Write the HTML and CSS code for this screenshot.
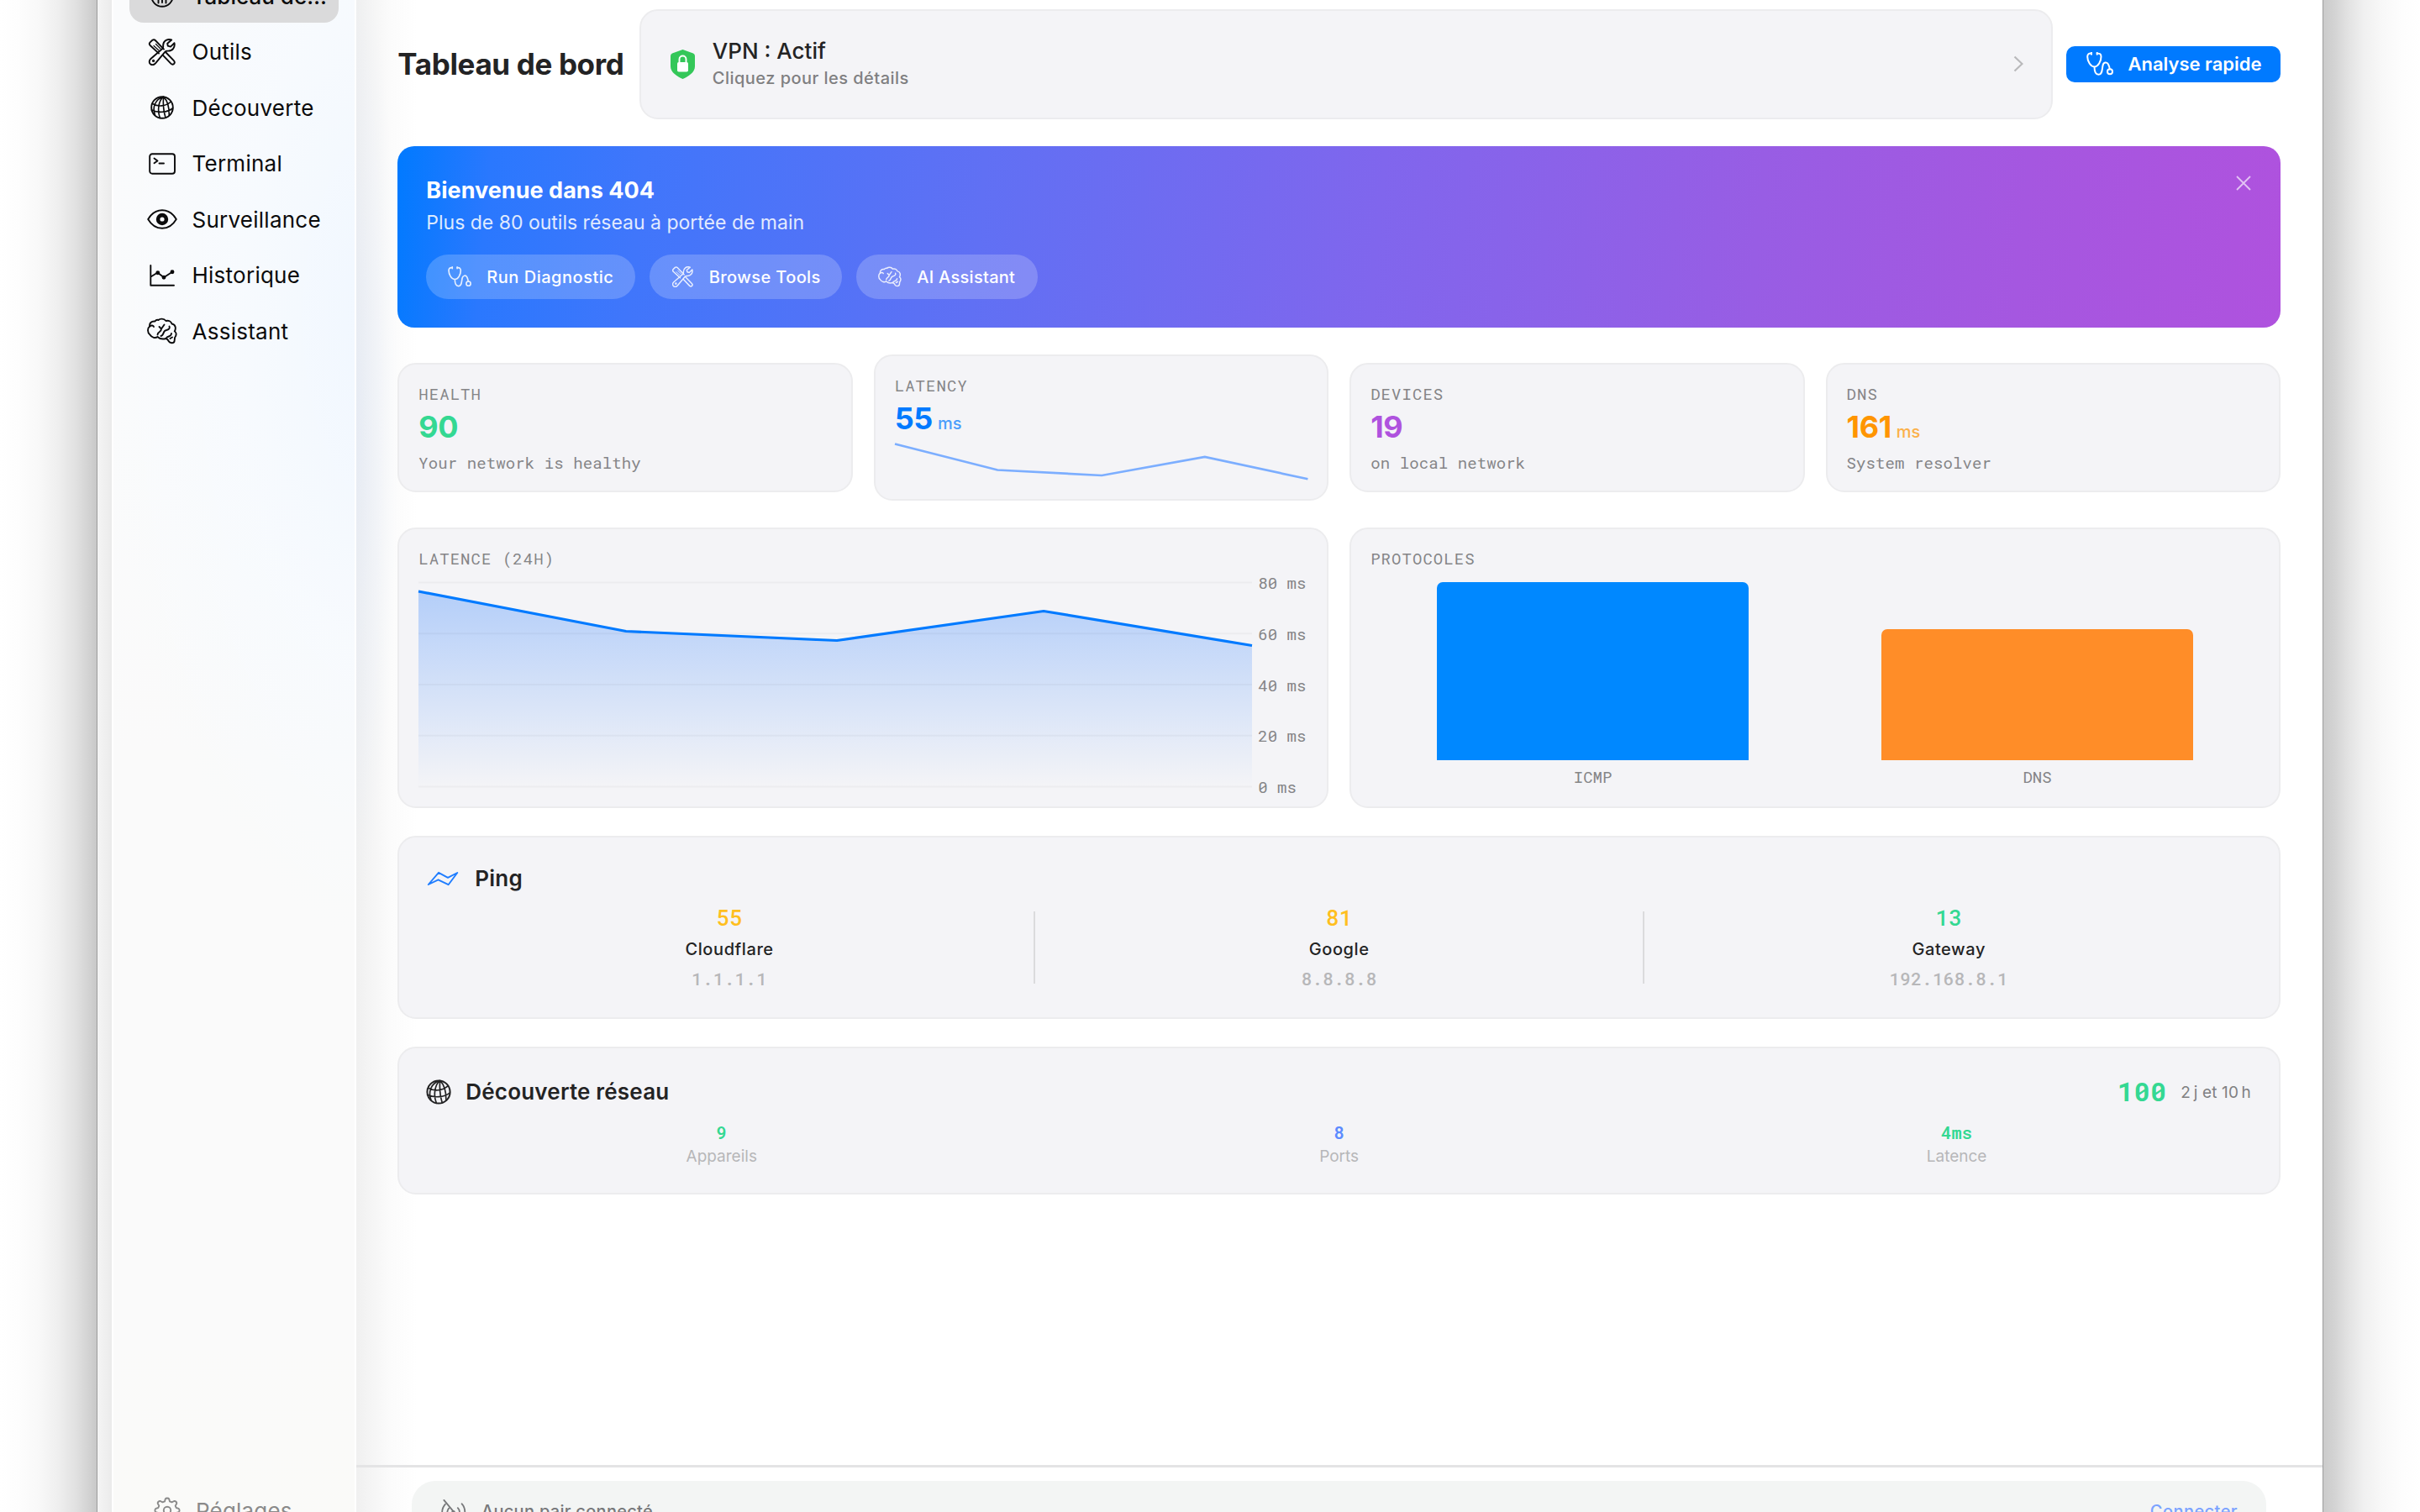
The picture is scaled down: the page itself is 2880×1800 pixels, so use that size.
FILE: index.html
```html
<!DOCTYPE html>
<html lang="fr">
<head>
<meta charset="utf-8">
<title>Tableau de bord</title>
<link rel="stylesheet" href="styles.css">
</head>
<body>
<svg class="sprite" aria-hidden="true">
  <symbol id="i-gauge" viewBox="0 0 32 32"><circle cx="16" cy="16" r="12.8"/><path d="M16 15V24M11.500 21v3.500M20.500 21v3.500"/></symbol>
  <symbol id="i-tools" viewBox="0 0 32 32">
    <path d="M1.600 8C.4 6.600.6 5.400 1.600 4.400L4.400 1.800C5.600.9 6.800 1 7.800 2L18 12.600M1.600 8L12 17.600"/>
    <path d="M6 8.500L12 14M8.500 6.500L14 12" stroke-width="1.200"/>
    <path d="M20.500 16.500L29.800 26.200C31.200 27.700 31 29 30 30C28.800 31 27.500 30.800 26.300 29.600L17 19.800"/>
    <path d="M27.200 1.500C22-.4 16.600 3 17.200 9C17.300 10.500 17 11.400 16 12.200L2.400 24C0 26.200.4 28.800 2 30.200C3.800 31.600 6.200 31.400 8 29.400L19.500 15.700C20.300 14.800 21.200 14.500 22.600 14.600C28.500 15 31.600 10 30.500 5.200L26 9.600L22.800 8.700L22.200 5.800Z"/>
    <circle cx="5.600" cy="26.400" r=".7"/>
  </symbol>
  <symbol id="i-globe" viewBox="0 0 32 32"><circle cx="16" cy="16" r="12.800"/><path stroke-width="1.600" d="M17.500 3.200C11.500 8 10 20 13.500 28.500M17.500 3.200C17 11 17.500 20 20 28M17.500 3.200C22.500 8 24.500 17 24.300 25.500M17.500 3.200C7.500 6 4 16 7.500 25M4.500 11.500C11 15.200 20 15 26.500 9M3.500 19C11 22.800 22 22 28.500 17"/></symbol>
  <symbol id="i-terminal" viewBox="0 0 32 32"><rect x="1.200" y="4.200" width="29.800" height="23.600" rx="3"/><path d="M6.500 9.500L10.500 12.400L6.500 15.300M12.500 15.500h5.500"/></symbol>
  <symbol id="i-eye" viewBox="0 0 36 32"><path d="M1.200 16C5 9.500 11 5.200 18 5.200S31 9.500 34.800 16C31 22.500 25 26.800 18 26.800S5 22.500 1.200 16Z"/><circle cx="18" cy="16" r="4.900" stroke-width="4.600"/></symbol>
  <symbol id="i-chart" viewBox="0 0 32 32"><path d="M2.300 4v23.700H30M2.500 17.500L10.500 12.500L18 18.300L28 11.800"/><g class="solid"><circle cx="10.800" cy="12.700" r="1.500"/><circle cx="18" cy="18.300" r="1.500"/><circle cx="28" cy="11.800" r="1.500"/></g></symbol>
  <symbol id="i-brain" viewBox="0 0 36 32">
    <path d="M9.500 4.500C5 4 2.500 7 3.200 10.500C.2 12.500.2 18 3.500 20.500C5.500 24 10 25 12.500 23C15 25.500 19 26 22.500 25C24.500 25.500 25 26.500 26 28.500C27 30.500 32 31 32.500 28.500C32.600 27 33 26 33 24C35.500 21 35 17.500 32.800 16.500C35 12.500 33.500 8 29.500 7.500C28.500 4.500 25.500 3 22.500 4C20 1 15.500 1 13.500 3C12 2.500 10.500 3 9.500 4.500Z"/>
    <path d="M3.200 10.500C5 8.800 7.500 9.300 8 11M14.500 11L17 13.500L20.500 8.500M17 13.500C17 18 12.500 16.500 12.500 20.500M16.500 22C20.500 21.500 18.500 15.500 23 15C26 14.500 27.500 12.500 26.500 10.500M22.500 25C24 21 28.500 24 29 19M27.500 25L30 23.500"/>
  </symbol>
  <symbol id="i-gear" viewBox="0 0 32 32"><circle cx="16" cy="16" r="4.200"/><path d="M13.800 2.500C14.500 1.200 17.500 1.200 18.200 2.500L19 5.400L21.500 6.400L24.200 5C25.800 4.600 27.700 6.400 27.200 8L25.700 10.600L26.700 13L29.500 13.800C30.900 14.500 30.900 17.500 29.500 18.200L26.700 19L25.700 21.400L27.200 24C27.700 25.600 25.800 27.500 24.200 27L21.500 25.600L19 26.600L18.200 29.500C17.500 30.800 14.500 30.800 13.800 29.500L13 26.600L10.500 25.600L7.800 27C6.200 27.500 4.300 25.600 4.800 24L6.300 21.400L5.300 19L2.500 18.200C1.100 17.500 1.100 14.500 2.500 13.800L5.300 13L6.300 10.600L4.800 8C4.300 6.400 6.200 4.600 7.800 5L10.500 6.400L13 5.400Z"/></symbol>
  <symbol id="i-steth" viewBox="0 0 32 28"><path d="M6 1.700C3 1.300 1.200 2.500 1.200 5.500C1.200 11 5 17.500 9.500 17.500S17.500 11 17.500 5.500C17.500 2.500 16 1.300 12.700 1.700M9.500 17.500C9.500 23 11 26.700 14.500 26.700C19 26.700 18.500 21 19.500 16C20.300 12 24.300 11.300 26 14.500C27 16.500 27.500 18.500 27.800 20.300"/><circle cx="28" cy="23.300" r="3"/><path d="M6 .8v2M12.700.8v2"/></symbol>
  <symbol id="i-antenna" viewBox="0 0 32 32"><path d="M4.500 2L28 30M6 7C1 12.500 1 21 6 26M10.500 12C8 15 8 18.500 10.500 22M26.500 6.500C31.500 12 31 20 27.500 24.500M21.500 11.500C24 14 24 17 23 19.500"/><circle cx="16" cy="17" r="1.500"/></symbol>
</svg>

<div class="desktop">
  <div class="shade shade-left"></div>
  <div class="window">
    <div class="rail">
      <aside class="sidebar">
        <nav class="nav">
          <a class="nav-item active"><svg class="icon nav-icon"><use href="#i-gauge"/></svg>Tableau de…</a>
          <a class="nav-item"><svg class="icon nav-icon"><use href="#i-tools"/></svg>Outils</a>
          <a class="nav-item"><svg class="icon nav-icon"><use href="#i-globe"/></svg>Découverte</a>
          <a class="nav-item"><svg class="icon nav-icon"><use href="#i-terminal"/></svg>Terminal</a>
          <a class="nav-item"><svg class="icon nav-icon"><use href="#i-eye"/></svg>Surveillance</a>
          <a class="nav-item"><svg class="icon nav-icon"><use href="#i-chart"/></svg>Historique</a>
          <a class="nav-item"><svg class="icon nav-icon"><use href="#i-brain"/></svg>Assistant</a>
        </nav>
        <a class="nav-item settings"><svg class="icon nav-icon"><use href="#i-gear"/></svg>Réglages</a>
      </aside>
    </div>

    <div class="main">
      <main class="content">
        <header class="head">
          <h1>Tableau de bord</h1>
          <div class="card vpn">
            <svg class="shield" viewBox="0 0 29 35"><path d="M14.500 0L27 4.600Q29 5.400 29 7.500V20C29 27 22 31.500 14.500 35C7 31.500 0 27 0 20V7.500Q0 5.400 2 4.600Z" fill="#34c759"/><rect x="8" y="15" width="13" height="11.500" rx="1.800" fill="#fff"/><path d="M10.500 15.500V11.500a4 4 0 0 1 8 0V15.500" fill="none" stroke="#fff" stroke-width="1.900"/></svg>
            <div class="vpn-text"><div class="vpn-title">VPN : Actif</div><div class="vpn-sub">Cliquez pour les détails</div></div>
            <svg class="chevron" viewBox="0 0 12 20"><path d="M1.500 1.500L10.500 10L1.500 18.500"/></svg>
          </div>
          <button class="scan"><svg class="icon"><use href="#i-steth"/></svg>Analyse rapide</button>
        </header>

        <section class="banner">
          <h2>Bienvenue dans 404</h2>
          <p>Plus de 80 outils réseau à portée de main</p>
          <div class="pills">
            <span class="pill p1"><svg class="icon"><use href="#i-steth"/></svg>Run Diagnostic</span>
            <span class="pill p2"><svg class="icon"><use href="#i-tools"/></svg>Browse Tools</span>
            <span class="pill p3"><svg class="icon"><use href="#i-brain"/></svg>AI Assistant</span>
          </div>
          <svg class="close" viewBox="0 0 18 18"><path d="M1 1L17 17M17 1L1 17"/></svg>
        </section>

        <section class="stats">
          <div class="card stat"><div class="label">HEALTH</div><div class="value green">90</div><div class="caption">Your network is healthy</div></div>
          <div class="card stat"><div class="label">LATENCY</div><div class="value blue">55<small>ms</small></div>
            <svg class="spark" viewBox="0 0 491 46" preserveAspectRatio="none"><polyline points="0,2.500 122,33.500 246,40 368.500,18 491,44.200"/></svg></div>
          <div class="card stat"><div class="label">DEVICES</div><div class="value purple">19</div><div class="caption">on local network</div></div>
          <div class="card stat"><div class="label">DNS</div><div class="value orange">161<small>ms</small></div><div class="caption">System resolver</div></div>
        </section>

        <section class="charts">
          <div class="card chart">
            <div class="label">LATENCE (24H)</div>
            <div class="plot">
              <svg class="area" viewBox="0 0 992 244" preserveAspectRatio="none">
                <defs><linearGradient id="fade" x1="0" y1="0" x2="0" y2="1"><stop offset="0" stop-color="#257aff" stop-opacity=".31"/><stop offset="1" stop-color="#257aff" stop-opacity="0"/></linearGradient></defs>
                <polygon points="0,11 247,58.500 498,69.500 744,34.500 992,75.500 992,244 0,244" fill="url(#fade)"/>
                <path class="grid" d="M0 .5H992M0 61.300H992M0 122H992M0 182.800H992M0 243.500H992"/>
                <polyline class="line" points="0,11 247,58.500 498,69.500 744,34.500 992,75.500"/>
              </svg>
              <div class="axis"><span>80 ms</span><span>60 ms</span><span>40 ms</span><span>20 ms</span><span>0 ms</span></div>
            </div>
          </div>
          <div class="card chart">
            <div class="label">PROTOCOLES</div>
            <div class="bars">
              <div class="bar-col"><div class="bar icmp" style="height:212px"></div><span>ICMP</span></div>
              <div class="bar-col"><div class="bar dns" style="height:156px"></div><span>DNS</span></div>
            </div>
          </div>
        </section>

        <section class="card ping">
          <div class="section-head"><svg class="ping-icon" viewBox="0 0 38 20"><path d="M1.800 17L14 2.800L25 8.800L36.300 3L25.600 17.200L13.500 11.300Z"/></svg><h3>Ping</h3></div>
          <div class="hosts">
            <div class="host"><b class="yellow">55</b><span class="name">Cloudflare</span><span class="ip">1.1.1.1</span></div>
            <i class="rule"></i>
            <div class="host"><b class="yellow">81</b><span class="name">Google</span><span class="ip">8.8.8.8</span></div>
            <i class="rule"></i>
            <div class="host"><b class="green">13</b><span class="name">Gateway</span><span class="ip">192.168.8.1</span></div>
          </div>
        </section>

        <section class="card discovery">
          <div class="section-head"><svg class="icon globe"><use href="#i-globe"/></svg><h3>Découverte réseau</h3><span class="score">100</span><span class="age">2&#8239;j et 10&#8239;h</span></div>
          <div class="facts">
            <div class="fact"><b class="green">9</b><span>Appareils</span></div>
            <div class="fact"><b class="indigo">8</b><span>Ports</span></div>
            <div class="fact"><b class="green">4ms</b><span>Latence</span></div>
          </div>
        </section>
      </main>

      <footer class="foot">
        <div class="peer"><svg class="icon"><use href="#i-antenna"/></svg><span>Aucun pair connecté</span><a>Connecter</a></div>
      </footer>
    </div>
  </div>
  <div class="shade shade-right"></div>
</div>
</body>
</html>
```

FILE: styles.css
```css
* { box-sizing: border-box; }

body {
  margin: 0;
  height: 1800px;
  overflow: hidden;
  background: #fff;
  color: #232324;
  font-family: Inter, "Liberation Sans", sans-serif;
  -webkit-font-smoothing: antialiased;
}

h1, h2, h3, p { margin: 0; }

.sprite { position: absolute; width: 0; height: 0; }

.icon {
  flex: none;
  fill: none;
  stroke: currentColor;
  stroke-width: 1.9;
  stroke-linecap: round;
  stroke-linejoin: round;
}
.solid { fill: currentColor; }

/* Window frame and its drop shadow */
.desktop {
  display: grid;
  grid-template-columns: 115px 2650px 115px;
  height: 1800px;
}
.shade-left { background: linear-gradient(to left, #c8c8c8 0, #d3d3d3 10px, #e1e1e1 25px, #efefef 46px, #f8f8f8 68px, #fdfdfd 92px, #fff 115px); }
.shade-right { background: linear-gradient(to right, #cbcbcb 0, #d3d3d3 13px, #e2e2e2 29px, #f0f0f0 48px, #f8f8f8 70px, #fdfdfd 94px, #fff 115px); }
.window {
  display: flex;
  height: 1800px;
  border: solid #9c9c9c;
  border-width: 0 1px;
  background: #fff;
}

/* Sidebar */
.rail {
  flex: none;
  width: 308px;
  height: 1800px;
  padding-left: 17px;
  background: linear-gradient(to right, #f4f4f4, #ebebeb 17px);
}
.sidebar {
  display: flex;
  flex-direction: column;
  justify-content: space-between;
  width: 291px;
  height: 1830px;
  padding: 0 19px;
  border: solid #fefefe;
  border-width: 0 2px;
  background:
    radial-gradient(ellipse 340px 740px at 330px 380px, #f0f7ff, rgba(246, 250, 255, .7) 55%, rgba(250, 250, 250, 0)),
    linear-gradient(#fafbfc, #fafbfc 500px, #fafafa 900px, #fafafa 1600px, #fafaf8);
}
.nav {
  display: flex;
  flex-direction: column;
  gap: 1.5px;
  margin-top: -38px;
}
.nav-item {
  display: flex;
  align-items: center;
  gap: 17.5px;
  height: 65px;
  padding: 1px 0 0 21px;
  border-radius: 17px;
  color: #0b0b0c;
  font-size: 26px;
  letter-spacing: .25px;
  white-space: nowrap;
}
.nav-icon { width: 36px; height: 32px; }
.nav-item.active { background: #dadadb; font-weight: 500; letter-spacing: 0; }
.nav-item.settings { padding-left: 27px; gap: 16px; color: #8a8a8a; letter-spacing: .2px; }

/* Main column */
.main {
  display: flex;
  flex-direction: column;
  flex: 1;
  height: 1800px;
  background:
    radial-gradient(ellipse 50px 560px at 0 500px, rgba(200, 220, 255, .24), rgba(200, 220, 255, 0)),
    linear-gradient(to right, #f0f0f0, #f5f5f5 18px, #fbfbfb 40px, #fff 72px);
}
.content {
  display: flex;
  flex-direction: column;
  gap: 32.5px;
  height: 1744px;
  padding: 10.5px 50px 0 49.300px;
}
.card {
  border: 2px solid #ececee;
  border-radius: 22px;
  background: #f4f4f7;
}

.head { display: flex; align-items: center; height: 131px; }
h1 {
  width: 287.500px;
  font-size: 35px;
  line-height: 42px;
  letter-spacing: -.35px;
  white-space: nowrap;
}
.vpn {
  display: flex;
  align-items: center;
  flex: 1;
  height: 131px;
  padding: 0 33px 0 35px;
}
.shield { width: 29px; height: 35px; margin-right: 21px; }
.vpn-text { flex: 1; padding-top: 2px; }
.vpn-title { font-size: 26px; font-weight: 500; line-height: 33px; }
.vpn-sub { color: #7f7f81; font-size: 20px; font-weight: 500; line-height: 33px; letter-spacing: .47px; }
.chevron { width: 12px; height: 20px; fill: none; stroke: #b9b9bb; stroke-width: 2.2; }
.scan {
  display: flex;
  align-items: center;
  gap: 17.5px;
  width: 255px;
  height: 43px;
  margin-left: 16px;
  padding: 0 0 0 24px;
  border: 0;
  border-radius: 10px;
  background: #007aff;
  color: #fff;
  font: 600 22px Inter, sans-serif;
  white-space: nowrap;
}
.scan .icon { width: 32px; height: 28px; stroke-width: 2; }

/* Welcome banner */
.banner {
  position: relative;
  height: 215.5px;
  padding: 33.5px 34px;
  border-radius: 20px;
  background: linear-gradient(95.46deg, #007aff, #2a78fe 5%, #4076fb 13%, #6070f4 31%, #8066ed 52%, #985de4 72%, #a557e0 86%, #af52de);
  color: #fff;
}
h2 { font-size: 27px; line-height: 38px; letter-spacing: .03px; }
.banner p { font-size: 23px; line-height: 38px; opacity: .85; }
.pills { display: flex; gap: 16.5px; margin-top: 19.5px; }
.pill {
  display: flex;
  align-items: center;
  height: 53px;
  border-radius: 27px;
  background: rgba(255, 255, 255, .2);
  font-size: 20px;
  font-weight: 500;
  white-space: nowrap;
}
.p1 { width: 249px; padding-left: 26px; gap: 18px; letter-spacing: .52px; }
.p2 { width: 229.500px; padding-left: 27px; gap: 19px; letter-spacing: .4px; }
.p3 { width: 216px; padding-left: 26px; gap: 18.5px; letter-spacing: .28px; }
.pill .icon { opacity: .85; }
.p1 .icon { width: 28px; height: 25px; }
.p2 .icon { width: 25px; height: 25px; }
.p3 .icon { width: 28px; height: 25px; }
.close {
  position: absolute;
  top: 35px;
  right: 35px;
  width: 18px;
  height: 18px;
  stroke: rgba(255, 255, 255, .65);
  stroke-width: 1.8;
}

/* Stat tiles */
.stats {
  display: grid;
  grid-template-columns: repeat(4, 1fr);
  align-items: center;
  gap: 25px;
  height: 173.5px;
}
.stat { padding: 23px 23px 21.5px; }
.label, .caption, .axis, .bar-col, .host b, .ip, .score, .fact b {
  font-family: "Roboto Mono", "DejaVu Sans Mono", monospace;
}
.label { color: #858587; font-size: 19px; line-height: 24px; letter-spacing: 1.05px; }
.caption { margin-top: 10px; color: #858587; font-size: 19px; line-height: 24px; letter-spacing: .1px; }
.value { height: 42px; margin-top: 6px; font-size: 36px; font-weight: 700; line-height: 42px; letter-spacing: -.4px; }
.value small { margin-left: 6px; font-size: 20px; font-weight: 500; line-height: 1; letter-spacing: 0; opacity: .7; }
.spark { display: block; width: 100%; height: 46px; margin-top: 7px; overflow: visible; }
.spark polyline { fill: none; stroke: #7caeff; stroke-width: 2.7; }
.green { color: #34d892; }
.blue { color: #007aff; }
.purple { color: #af52de; }
.orange { color: #ff9500; }
.yellow { color: #ffbf1f; }
.indigo { color: #5c8bff; }

/* Charts */
.charts { display: grid; grid-template-columns: 1fr 1fr; gap: 25px; height: 334px; }
.chart { padding: 23px; }
.plot { display: flex; height: 244px; margin-top: 16px; }
.area { width: 992px; height: 244px; overflow: visible; }
.grid { stroke: rgba(0, 0, 0, .03); stroke-width: 2; }
.line { fill: none; stroke: #007aff; stroke-width: 3.2; stroke-linejoin: round; }
.axis {
  display: flex;
  flex-direction: column;
  justify-content: space-between;
  margin: -11px 0 -12px 7px;
  color: #858587;
  font-size: 19px;
  line-height: 24px;
}
.bars { display: flex; height: 244px; margin-top: 16px; }
.bar-col {
  display: flex;
  flex: 1;
  flex-direction: column;
  align-items: center;
  justify-content: flex-end;
  gap: 8px;
  color: #858587;
  font-size: 19px;
  line-height: 24px;
}
.bar { width: 70%; border-radius: 7px 7px 0 0; }
.icmp { background: #08f; }
.dns { background: #ff8d28; }

/* Ping */
.ping { height: 218.5px; padding: 31px 31px 0; }
.section-head { display: flex; align-items: center; height: 36px; }
h3 { font-size: 26px; font-weight: 600; letter-spacing: .2px; }
.ping-icon { width: 38px; height: 20px; margin: 0 19px 0 2px; fill: none; stroke: #1f7dff; stroke-width: 1.9; stroke-linejoin: round; }
.hosts { display: flex; margin-top: 10.5px; }
.host { display: flex; flex: 1; flex-direction: column; align-items: center; }
.host b { font-size: 26px; font-weight: 500; line-height: 36px; }
.name { margin-top: 2px; font-size: 20px; font-weight: 500; line-height: 36px; letter-spacing: .6px; }
.ip { margin-top: -.5px; color: #b7b7b9; font-size: 21px; font-weight: 500; line-height: 34px; letter-spacing: .25px; }
.rule { width: 2px; height: 86px; margin-top: 11px; background: #dbdbdd; }

/* Network discovery */
.discovery { height: 176px; padding: 34px 33px 0 31px; }
.globe { width: 34px; height: 34px; margin: 0 15px 0 -1px; }
.score { margin: -2px 0 0 auto; color: #34d892; font-size: 32px; font-weight: 700; letter-spacing: .2px; }
.age { margin: 1px 0 0 17px; color: #808082; font-size: 19px; letter-spacing: .15px; }
.facts { display: flex; gap: 30px; margin: 17px -2px 0 0; }
.fact { display: flex; flex: 1; flex-direction: column; align-items: center; color: #b7b7b9; font-size: 19px; line-height: 28px; }
.fact b { font-size: 20.5px; font-weight: 600; line-height: 28px; }

/* Footer */
.foot { flex: none; height: 56px; padding: 16px 67px 0 66px; border-top: 3px solid #e4e4e5; }
.peer {
  display: flex;
  align-items: center;
  height: 72px;
  padding: 0 34px;
  border-radius: 28px;
  background: #f3f5f4;
  color: #77787a;
  font-size: 20px;
  font-weight: 500;
  letter-spacing: .29px;
}
.peer .icon { width: 31px; height: 31px; margin-right: 18px; }
.peer a { margin-left: auto; color: #7ba3ff; letter-spacing: .44px; }
```
